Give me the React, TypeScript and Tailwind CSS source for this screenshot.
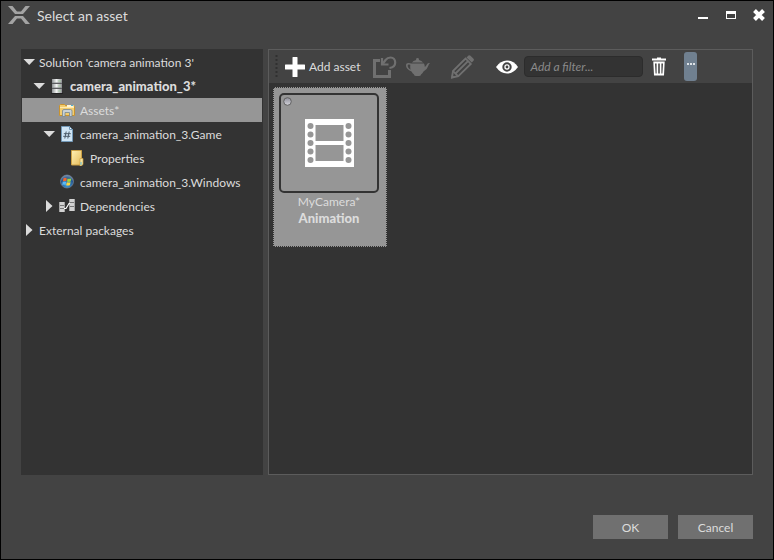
import { ReactNode, useState } from 'react'
import { twMerge } from 'tailwind-merge'

type TreeItem = {
	label: string
	depth: string
	arrow?: 'open' | 'closed'
	icon?: ReactNode
	bold?: boolean
}

const Logo = () => (
	<svg width="22" height="18" viewBox="0 0 22 18" aria-hidden>
		<path
			d="M0 0H4.5L9 5.5H13L17.5 0H22L15 8H7Z M0 18H4.5L9 12.5H13L17.5 18H22L15 10H7Z"
			fill="#a3a3a3"
		/>
	</svg>
)

const ServerIcon = () => (
	<svg width="16" height="16" viewBox="0 0 16 16" aria-hidden>
		<defs>
			<linearGradient id="server" x1="0" x2="1">
				<stop offset="0" stopColor="#8f9395" />
				<stop offset=".45" stopColor="#f1f3f2" />
				<stop offset="1" stopColor="#8f8f94" />
			</linearGradient>
		</defs>
		<path d="M3 1h10v4H3zM3 6h10v4H3zM3 11h10v4H3z" fill="url(#server)" />
		<path d="M3 5h10M3 10h10" stroke="#85888b" />
		<path d="M9 3h3M9 8h3M9 13h3" stroke="#a9cfa6" />
		<path d="M2 15.5h12" stroke="#222" />
	</svg>
)

const LibraryIcon = () => (
	<svg width="16" height="16" viewBox="0 0 16 16" aria-hidden>
		<path d="M.5 13.5v-10l1-1h4l1 1h8l1 1v9z" fill="#f2cd70" stroke="#c8922e" />
		<path d="M8 3h6.5v2H8z" fill="#fff5d6" />
		<path d="M12 3.5h2" stroke="#4db6d8" />
		<path d="M1 5.5h14" stroke="#ffebaf" />
		<path
			d="M3.5 14.5V9Q3.5 7.500 5 7.500h6.500Q13 7.500 13 9v5.500h-2.500v-4h-4.500v4z"
			fill="#c9d1d6"
			stroke="#77868f"
			strokeWidth=".8"
		/>
	</svg>
)

const CsharpIcon = () => (
	<svg width="16" height="16" viewBox="0 0 16 16" aria-hidden>
		<path d="M2.5.5h8l3 3v12h-11z" fill="#cfe5f5" stroke="#7399b8" />
		<path d="M10.5.5v3h3z" fill="#f6fbff" stroke="#7399b8" />
		<path
			d="M7.2 5.5 5.800 12.500M10.200 5.500 8.800 12.500M4.800 7.700h7M4.200 10.300h7"
			stroke="#4b5c6b"
		/>
	</svg>
)

const FolderIcon = () => (
	<svg width="16" height="16" viewBox="0 0 16 16" aria-hidden>
		<defs>
			<linearGradient id="folder" x1="0" x2="1" y2="1">
				<stop offset="0" stopColor="#fff0b5" />
				<stop offset="1" stopColor="#e5bb59" />
			</linearGradient>
		</defs>
		<path d="M2.5.5h10v14.5h-10z" fill="url(#folder)" stroke="#cda145" />
		<path d="M11 8.5h3v6l-2 1.500h-1z" fill="#f6e3a1" stroke="#cda145" strokeWidth=".7" />
		<path d="M12 12v3" stroke="#5bb8d0" />
	</svg>
)

const WindowsIcon = () => (
	<svg width="16" height="16" viewBox="0 0 16 16" aria-hidden>
		<defs>
			<radialGradient id="orb" cx=".5" cy=".75" r=".7">
				<stop offset="0" stopColor="#3fa2e0" />
				<stop offset=".7" stopColor="#25568f" />
				<stop offset="1" stopColor="#6f8bab" />
			</radialGradient>
		</defs>
		<circle cx="8" cy="7.5" r="6.5" fill="url(#orb)" stroke="#7d8ea6" strokeWidth=".6" />
		<path d="M4.5 4.200Q6 3.300 7.800 4.200L7.200 7.300Q5.500 6.500 3.800 7.400Z" fill="#f0652d" />
		<path d="M8.5 4.400Q10.500 5.300 12.300 4.400L11.600 7.500Q9.800 8.300 8 7.500Z" fill="#9bd342" />
		<path d="M3.7 8Q5.400 7.200 7.100 8L6.500 11Q4.800 10.200 3.200 11Z" fill="#5cb9f2" />
		<path d="M7.9 8.200Q9.700 9 11.500 8.200L10.800 11.200Q9 12 7.200 11.200Z" fill="#ffd43a" />
	</svg>
)

const DependenciesIcon = () => (
	<svg width="16" height="16" viewBox="0 0 16 16" aria-hidden>
		<path d="M0 4h6v10H0zM10 1h6v12h-6z" fill="#d2d2d2" />
		<path d="M0 7.5h6M0 10.500h6M10 4.500h6M10 8.500h6" stroke="#777" />
		<path d="M10.5 1v12M15.500 1v12M.5 4v10M5.500 4v10" stroke="#a4a4a4" />
		<path d="M5 10.5H7L10 5.500H11" stroke="#fff" fill="none" strokeWidth="1.2" />
	</svg>
)

const items: TreeItem[] = [
	{ label: "Solution 'camera animation 3'", depth: 'pl-0', arrow: 'open' },
	{
		label: 'camera_animation_3*',
		depth: 'pl-[10px]',
		arrow: 'open',
		icon: <ServerIcon />,
		bold: true,
	},
	{ label: 'Assets*', depth: 'pl-5', icon: <LibraryIcon /> },
	{
		label: 'camera_animation_3.Game',
		depth: 'pl-5',
		arrow: 'open',
		icon: <CsharpIcon />,
	},
	{ label: 'Properties', depth: 'pl-[30px]', icon: <FolderIcon /> },
	{ label: 'camera_animation_3.Windows', depth: 'pl-5', icon: <WindowsIcon /> },
	{
		label: 'Dependencies',
		depth: 'pl-5',
		arrow: 'closed',
		icon: <DependenciesIcon />,
	},
	{ label: 'External packages', depth: 'pl-0', arrow: 'closed' },
]

const Arrow = ({ kind }: { kind: 'open' | 'closed' }) => (
	<svg width="16" height="16" viewBox="0 0 16 16" fill="#dcdcdc" aria-hidden>
		<path d={kind === 'open' ? 'M1.5 5H13L7.2 11Z' : 'M4 2V14L10.5 8Z'} />
	</svg>
)

const SolutionTree = () => {
	const [selected, setSelected] = useState('Assets*')
	return (
		<nav className="w-[242px] shrink-0 bg-[#333333] p-px">
			<ul>
				{items.map(({ label, depth, arrow, icon, bold }) => (
					<li key={label}>
						<button
							type="button"
							onClick={() => setSelected(label)}
							className={twMerge(
								'flex h-6 w-full items-center text-left whitespace-nowrap',
								depth,
								bold && 'text-[13px] font-black',
								selected === label && 'bg-[#969696]',
							)}
						>
							<span className="mr-px w-4 shrink-0">
								{arrow && <Arrow kind={arrow} />}
							</span>
							{icon && <span className="mr-[5px] w-4 shrink-0">{icon}</span>}
							<span className="pt-0.5">{label}</span>
						</button>
					</li>
				))}
			</ul>
		</nav>
	)
}

const Toolbar = () => (
	<div className="flex h-[33px] items-center bg-[#434343] pl-[6px]">
		<svg width="3" height="23" viewBox="0 0 3 23" aria-hidden>
			<path d="M1.5 0V23" stroke="#303030" strokeWidth="2" strokeDasharray="2 2" />
		</svg>
		<button type="button" className="ml-[7px] flex items-center gap-1">
			<svg width="20" height="20" viewBox="0 0 20 20" fill="#fff" aria-hidden>
				<path d="M8 0h4q.5 0 .5.5v7h7q.5 0 .5.5v4q0 .5-.5.5h-7v7q0 .5-.5.5H8q-.5 0-.5-.5v-7h-7Q0 12.5 0 12V8q0-.5.5-.5h7v-7Q7.5 0 8 0Z" />
			</svg>
			Add asset
		</button>
		<button type="button" aria-label="Import" disabled className="ml-[13px]">
			<svg
				width="24"
				height="22"
				viewBox="0 0 24 22"
				fill="none"
				stroke="#707070"
				aria-hidden
			>
				<path d="M7 4.5H1.5V20.5H16.5V14" strokeWidth="3" />
				<path
					d="M10 7.5L12.5 4Q14.5 1.5 17.5 1.5C20.5 1.5 22.2 3.8 22.2 6.5C22.2 9.3 20 11.5 16.5 12"
					strokeWidth="2.2"
				/>
				<path d="M9 2V8.5H15.5" strokeWidth="2.2" />
			</svg>
		</button>
		<button type="button" aria-label="Primitives" disabled className="ml-[9px]">
			<svg width="24" height="20" viewBox="0 0 24 20" aria-hidden>
				<path
					d="M10 2a1.6 1.6 0 0 1 3 0L12.8 3Q16 3.5 17 5.5H6Q7 3.5 10.2 3Z"
					fill="#707070"
				/>
				<path
					d="M5 6.5H18Q18.8 8 18.8 10Q20 9.5 21 7.3Q21.8 5.8 24 6Q22.8 7 22.2 9Q21 13 17.5 14.5Q16.5 16.5 15 17.5Q15 19 11.5 19T8 17.5Q6.5 16.5 5.5 14.5Q0 12 0 8.5Q0 5.5 4 6.2Z M4.3 7.8Q1.6 7 1.6 9Q2 11.5 4.5 12.7Q4 10 4.3 7.8Z"
					fill="#707070"
					fillRule="evenodd"
				/>
			</svg>
		</button>
		<button type="button" aria-label="Edit" disabled className="ml-5">
			<svg
				width="25"
				height="24"
				viewBox="0 0 25 24"
				fill="none"
				stroke="#707070"
				strokeWidth="1.8"
				aria-hidden
			>
				<path d="M2 22.5 3 16 15.5 3.5 20.8 9 8.3 21.2Z" />
				<path d="M3 16.2 8 21.2M5.5 18.5 18 6.2" />
				<path d="M1 23.5 1.8 19.5 5 22.6Z" fill="#707070" stroke="none" />
				<path
					d="M16.5 2.5 18.5.5Q19.5-.2 20.5.7L23.5 3.8Q24.3 4.8 23.5 5.8L21.8 7.5Z"
					fill="#707070"
					stroke="none"
				/>
			</svg>
		</button>
		<button type="button" aria-label="Display settings" className="ml-[21px]">
			<svg width="22" height="14" viewBox="0 0 22 14" aria-hidden>
				<path d="M0 7Q4.5.5 11 .5T22 7Q17.5 13.5 11 13.5T0 7Z" fill="#fff" />
				<circle cx="11" cy="7" r="4.7" fill="#434343" />
				<circle cx="11" cy="7" r="2.7" fill="#fff" />
				<circle cx="11" cy="7" r="1.4" fill="#434343" />
			</svg>
		</button>
		<input
			type="text"
			aria-label="Filter"
			placeholder="Add a filter..."
			className="ml-[6px] h-[21px] w-[119px] rounded border border-[#2c2c2c] bg-[#333333] px-[5px] italic outline-none placeholder:text-[#8a8a8a]"
		/>
		<button type="button" aria-label="Clear filters" className="ml-[9px]">
			<svg width="14" height="19" viewBox="0 0 14 19" aria-hidden>
				<path d="M5 1.5V.5h4v1h5v2H0v-2Z" fill="#fff" />
				<path
					d="M1.3 4.5H12.7L12 18.5H2Z M3 6.5 3.6 16.5H4.6V6.5Z M6.2 6.5V16.5H7.8V6.5Z M9.4 6.5V16.5H10.4L11 6.5Z"
					fill="#fff"
					fillRule="evenodd"
				/>
			</svg>
		</button>
		<button
			type="button"
			aria-label="More"
			className="ml-[18px] flex h-[29px] w-[13px] justify-center rounded-[3px] bg-[#708090] pt-[11px]"
		>
			<svg width="8" height="2" viewBox="0 0 8 2" fill="#dde2e6" aria-hidden>
				<path d="M0 0h2v2H0zM3 0h2v2H3zM6 0h2v2H6z" />
			</svg>
		</button>
	</div>
)

const AssetTile = ({ name, kind }: { name: string; kind: string }) => (
	<button
		type="button"
		className="flex h-40 w-[114px] flex-col items-center border border-dotted border-[#333333] bg-[#969696] pt-[5px] pr-[7px] pl-[5px] leading-4"
	>
		<span className="relative mb-px flex size-[100px] items-center justify-center rounded-[5px] border-2 border-[#333333]">
			<svg
				className="absolute top-0.5 left-0.5"
				width="9"
				height="9"
				viewBox="0 0 9 9"
				aria-hidden
			>
				<defs>
					<linearGradient id="bead" x2="0" y2="1">
						<stop offset="0" stopColor="#8d8d98" />
						<stop offset="1" stopColor="#d5d5dc" />
					</linearGradient>
				</defs>
				<circle cx="4.5" cy="4.5" r="3.8" fill="url(#bead)" stroke="#606060" />
			</svg>
			<svg width="49" height="48" viewBox="0 0 49 48" aria-hidden>
				<path d="M0 0H49V48H0Z M10.5 6V22H38.5V6Z M10.5 26V42H38.5V26Z" fill="#fff" fillRule="evenodd" />
				{[7, 15.5, 24, 32.5, 41].map((y) => (
					<g key={y} fill="#969696">
						<circle cx="5.5" cy={y} r="3" />
						<circle cx="43.5" cy={y} r="3" />
					</g>
				))}
			</svg>
		</span>
		<span>{name}</span>
		<span className="text-[13px] leading-4 font-black">{kind}</span>
	</button>
)

export default function App() {
	return (
		<div className="flex min-h-screen flex-col border border-black bg-[#434343] font-[Lato,'Open_Sans',sans-serif] text-xs text-[#dcdcdc]">
			<header className="flex h-7 items-center px-[7px]">
				<Logo />
				<h1 className="ml-[7px] pt-0.5 text-sm">Select an asset</h1>
				<div className="ml-auto flex items-center gap-[17px]">
					<button type="button" aria-label="Minimize">
						<svg width="11" height="12" viewBox="0 0 11 12" aria-hidden>
							<path d="M0 8h10v2H0z" fill="#fff" />
						</svg>
					</button>
					<button type="button" aria-label="Maximize">
						<svg width="10" height="12" viewBox="0 0 10 12" aria-hidden>
							<path d="M0 2h10v8H0zM1 5v4h8V5z" fill="#fff" fillRule="evenodd" />
						</svg>
					</button>
					<button type="button" aria-label="Close" className="mr-px">
						<svg width="12" height="12" viewBox="0 0 12 12" aria-hidden>
							<path d="M1.5 1.5 10.5 10.5M10.5 1.5 1.5 10.5" stroke="#fff" strokeWidth="4" />
						</svg>
					</button>
				</div>
			</header>
			<main className="mt-5 flex flex-1 gap-[5px] px-5">
				<SolutionTree />
				<section className="flex min-w-0 flex-1 flex-col border border-[#5c5c5c] bg-[#333333]">
					<Toolbar />
					<div className="flex flex-wrap p-1">
						<AssetTile name="MyCamera*" kind="Animation" />
					</div>
				</section>
			</main>
			<footer className="flex justify-end gap-[10px] px-5 pt-10 pb-5">
				<button type="button" className="h-6 w-[75px] bg-[#707070] pt-0.5">
					OK
				</button>
				<button type="button" className="h-6 w-[75px] bg-[#707070] pt-0.5">
					Cancel
				</button>
			</footer>
		</div>
	)
}
